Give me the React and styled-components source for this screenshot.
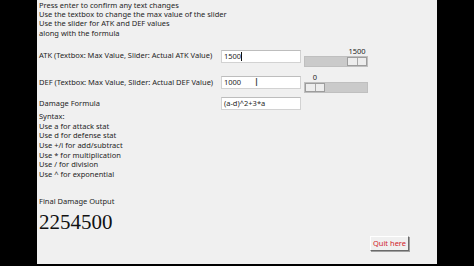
import React from "react";
import styled, { createGlobalStyle } from "styled-components";

const GlobalStyle = createGlobalStyle`
  html, body {
    margin: 0;
    padding: 0;
    background: #000;
  }
`;

const Page = styled.div`
  width: 474px;
  height: 266px;
  background: #000;
  display: flex;
  justify-content: center;
  overflow: hidden;
`;

const Window = styled.div`
  width: 400px;
  height: 264px;
  background: #f0f0f0;
  box-sizing: border-box;
  padding: 1px 0 0 2px;
  display: flex;
  flex-direction: column;
  font-family: "Noto Sans", "Open Sans", sans-serif;
  font-size: 7.5px;
  color: #1e1e1e;
`;

const TextBlock = styled.div`
  line-height: ${(p) => p.$lh || 9.2}px;
  margin-top: ${(p) => p.$mt || 0}px;
  white-space: pre;
`;

const FormRow = styled.div`
  display: grid;
  grid-template-columns: 179px 80px 64px;
  column-gap: 3px;
  align-items: center;
  margin-top: ${(p) => p.$mt || 0}px;
`;

const Label = styled.div`
  white-space: nowrap;
  padding-bottom: ${(p) => p.$lift || 0}px;
`;

const Entry = styled.div`
  height: 13px;
  box-sizing: border-box;
  background: #fff;
  border: 1px solid #d2d2d2;
  border-top-color: #bdbdbd;
  padding-left: 2px;
  line-height: 11px;
  display: flex;
  align-items: center;
  position: relative;
`;

const Caret = styled.span`
  display: inline-block;
  width: 1px;
  height: 9px;
  background: #111;
`;

const IBeam = styled.span`
  position: absolute;
  left: 33px;
  top: 0px;
  font-family: "DejaVu Sans", sans-serif;
  font-size: 10px;
  line-height: 11px;
  color: #444;
`;

const ScaleWrap = styled.div`
  display: flex;
  flex-direction: column;
  width: 64px;
`;

const ScaleValue = styled.div`
  height: 10px;
  line-height: 10px;
  position: relative;
`;

const ValueText = styled.span`
  position: absolute;
  transform: translateX(-50%);
`;

const Trough = styled.div`
  position: relative;
  height: 11px;
  box-sizing: border-box;
  background: #cacaca;
  border: 1px solid #bfbfbf;
`;

const Handle = styled.div`
  position: absolute;
  top: 0;
  width: 20px;
  height: 9px;
  box-sizing: border-box;
  display: flex;
  border: 1px solid #9d9d9d;
  background: #e6e6e6;
`;

const HandleHalf = styled.div`
  flex: 1;
  border-right: ${(p) => (p.$divider ? "1px solid #a8a8a8" : "none")};
  background: #ededed;
`;

const BigNumber = styled.div`
  font-family: "Liberation Serif", serif;
  font-size: 21px;
  line-height: 24px;
  margin-top: 4px;
  color: #111;
`;

const ButtonRow = styled.div`
  display: flex;
  justify-content: flex-end;
  padding-right: 28px;
  margin-top: 2px;
`;

const QuitButton = styled.button`
  width: 39px;
  height: 15px;
  padding: 0;
  box-sizing: border-box;
  background: #f0f0f0;
  border: 1px solid;
  border-color: #fff #6a6a6a #6a6a6a #fff;
  box-shadow: 1px 1px 0 #a0a0a0;
  color: #d0212b;
  font-family: "Noto Sans", "Open Sans", sans-serif;
  font-size: 7.5px;
  line-height: 12px;
`;

function Scale({ value, max }) {
  const travel = 64 - 2 - 20;
  const left = max > 0 ? (value / max) * travel : 0;
  return (
    <ScaleWrap>
      <ScaleValue>
        <ValueText style={{ left: left + 11 }}>{value}</ValueText>
      </ScaleValue>
      <Trough>
        <Handle style={{ left }}>
          <HandleHalf $divider />
          <HandleHalf />
        </Handle>
      </Trough>
    </ScaleWrap>
  );
}

export default function App() {
  return (
    <Page>
      <GlobalStyle />
      <Window>
        <TextBlock>
          {"Press enter to confirm any text changes\nUse the textbox to change the max value of the slider\nUse the slider for ATK and DEF values\nalong with the formula"}
        </TextBlock>

        <FormRow $mt={8}>
          <Label $lift={2}>ATK (Textbox: Max Value, Slider: Actual ATK Value)</Label>
          <Entry>
            1500
            <Caret />
          </Entry>
          <Scale value={1500} max={1500} />
        </FormRow>

        <FormRow $mt={5}>
          <Label>DEF (Textbox: Max Value, Slider: Actual DEF Value)</Label>
          <Entry>
            1000
            <IBeam>I</IBeam>
          </Entry>
          <Scale value={0} max={1000} />
        </FormRow>

        <FormRow $mt={4}>
          <Label>Damage Formula</Label>
          <Entry>(a-d)^2+3*a</Entry>
        </FormRow>

        <TextBlock $lh={9.7} $mt={2}>
          {"Syntax:\nUse a for attack stat\nUse d for defense stat\nUse +/i for add/subtract\nUse * for multiplication\nUse / for division\nUse ^ for exponential"}
        </TextBlock>

        <TextBlock $mt={17}>Final Damage Output</TextBlock>
        <BigNumber>2254500</BigNumber>

        <ButtonRow>
          <QuitButton>Quit here</QuitButton>
        </ButtonRow>
      </Window>
    </Page>
  );
}
